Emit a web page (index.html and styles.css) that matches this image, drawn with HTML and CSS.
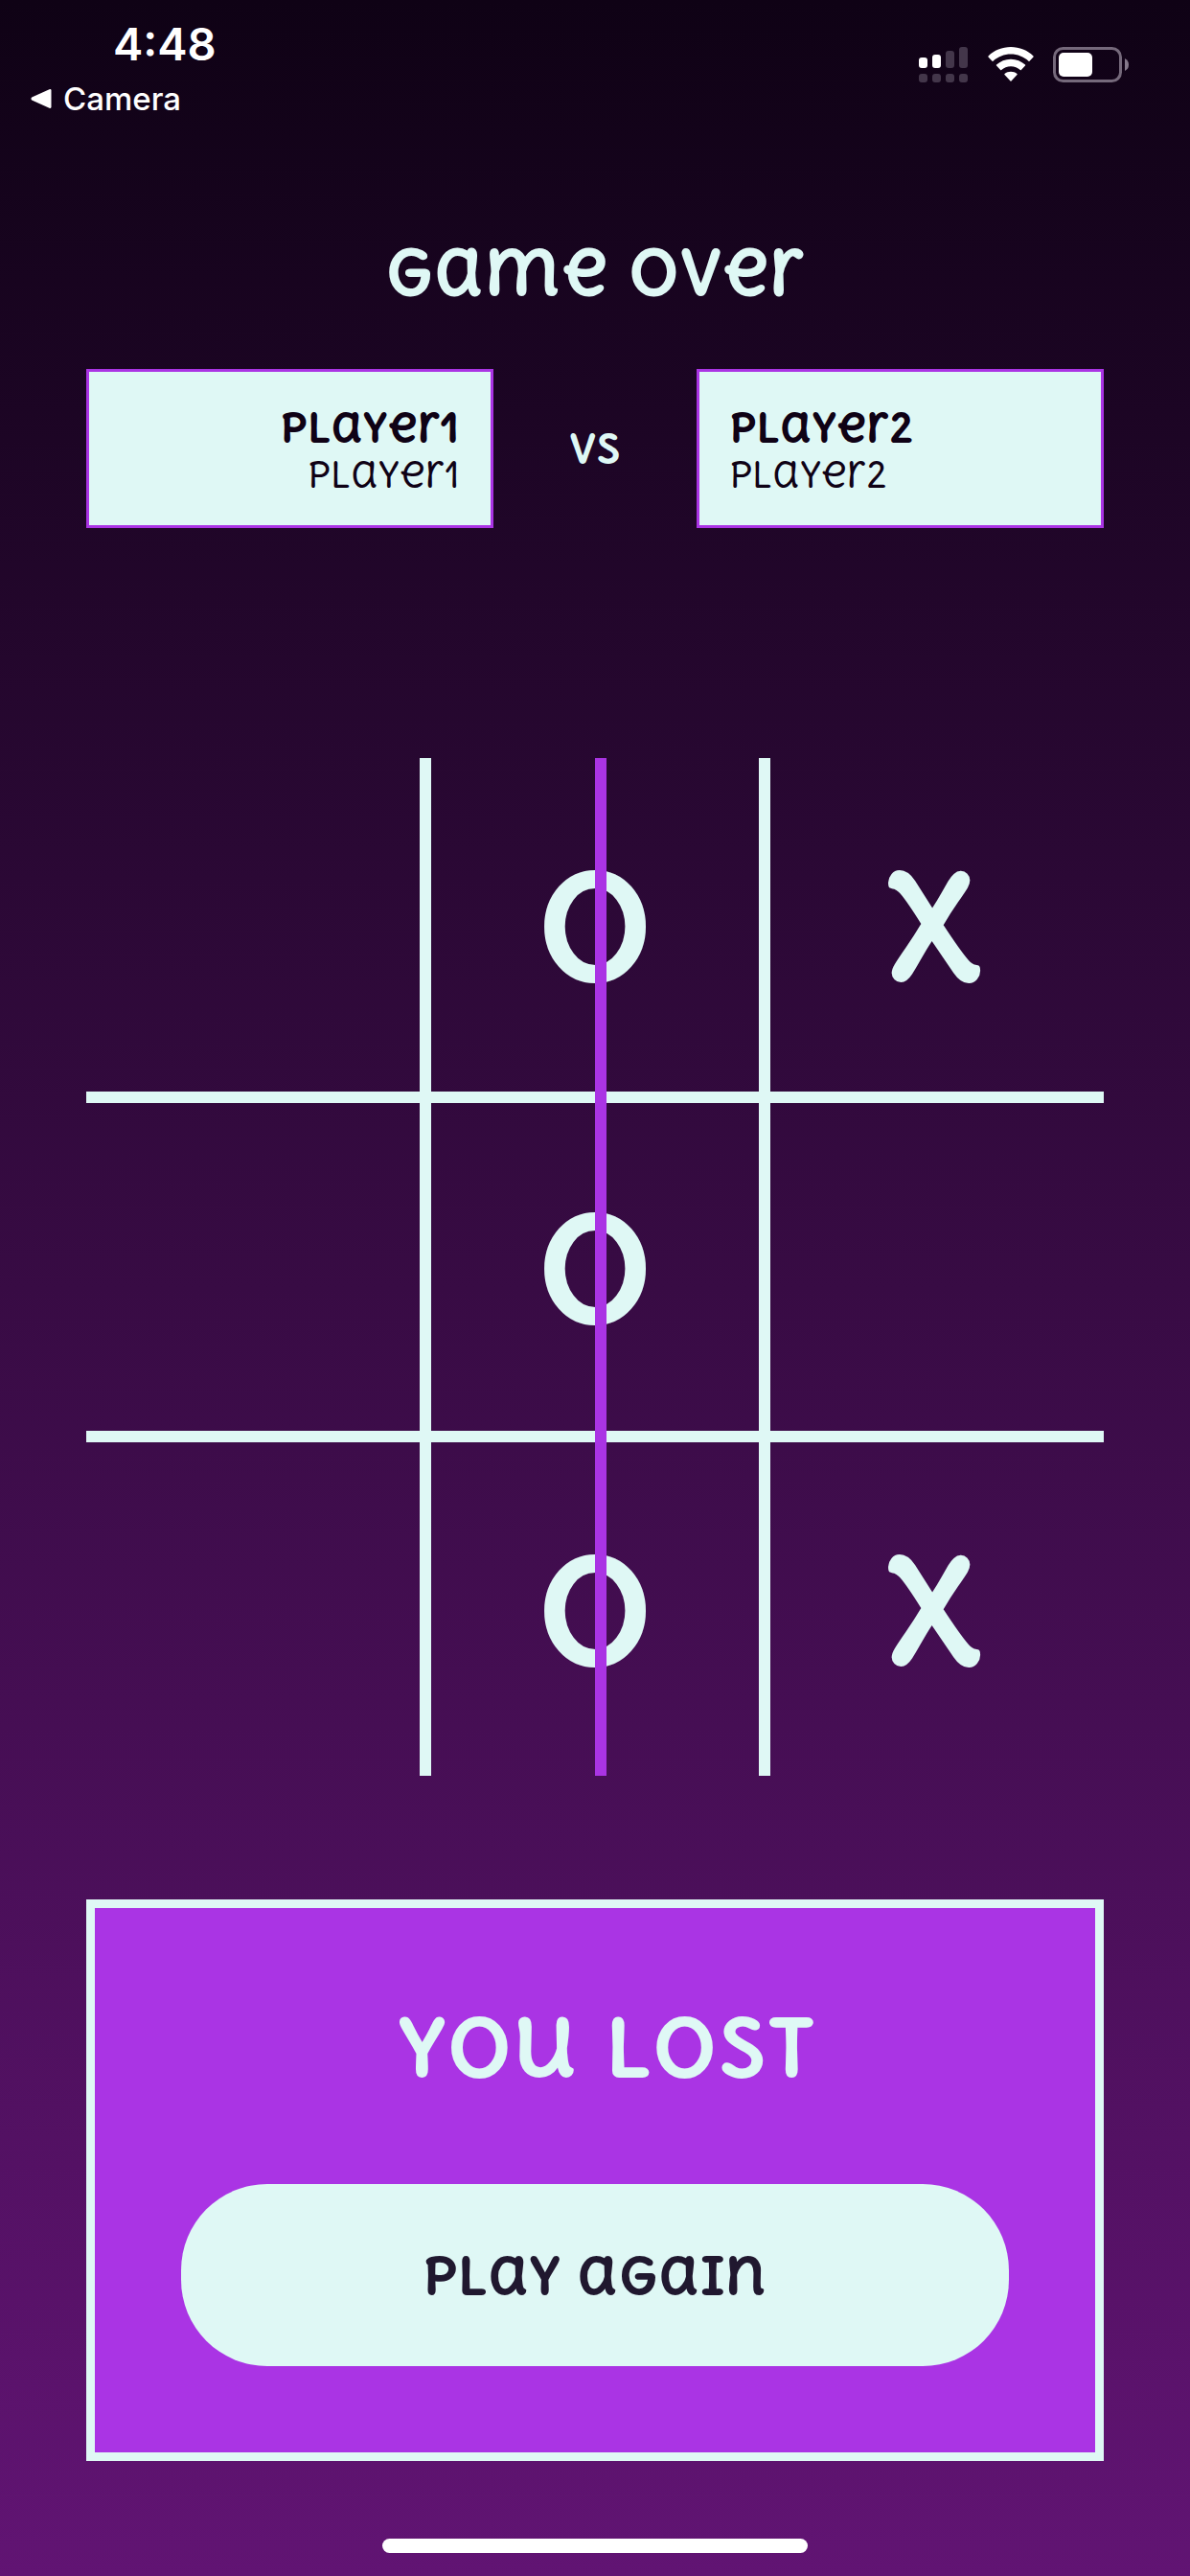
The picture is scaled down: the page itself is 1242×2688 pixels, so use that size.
FILE: index.html
```html
<!DOCTYPE html>
<html lang="en">
<head>
  <meta charset="utf-8">
  <meta name="viewport" content="width=device-width, initial-scale=1">
  <title>Game Over</title>
  <link rel="stylesheet" href="styles.css">
</head>
<body>
  <header class="status">
    <div class="status-left">
      <time class="clock">4:48</time>
      <a class="back" href="#">
        <svg width="22" height="22" viewBox="0 0 22 22" aria-hidden="true"><path d="M1.200 9.500 19.500 1.200Q21.500 .5 21.500 2.500V19.500Q21.500 21.500 19.500 20.800L1.200 12.500Q-.3 11 1.200 9.500Z" fill="#fff"/></svg>
        <span>Camera</span>
      </a>
    </div>
    <div class="status-icons">
      <svg width="52" height="38" viewBox="0 0 52 38" role="img" aria-label="Signal">
        <g fill="#fff"><rect x="0" y="11" width="9" height="11" rx="3"/><rect x="14" y="8" width="9" height="14" rx="3"/></g>
        <g fill="#43364a"><rect x="28" y="4" width="9" height="18" rx="3"/><rect x="42" y="0" width="9" height="22" rx="3"/><rect x="0" y="28" width="9" height="9" rx="3"/><rect x="14" y="28" width="9" height="9" rx="3"/><rect x="28" y="28" width="9" height="9" rx="3"/><rect x="42" y="28" width="9" height="9" rx="3"/></g>
      </svg>
      <svg width="48" height="38" viewBox="0 0 48 38" role="img" aria-label="Wi-Fi">
        <g fill="#fff"><path d="M24 0C33 0 41.500 3.500 47.500 9.500Q48 10 47.500 10.500L43.500 14.800Q43 15.200 42.500 14.800C37.500 10.200 31 7.600 24 7.600S10.500 10.200 5.500 14.800Q5 15.200 4.500 14.800L.5 10.500Q0 10 .5 9.500C6.500 3.500 15 0 24 0Z"/><path d="M24 12.800C29.800 12.800 35 15 39 18.600Q39.500 19.100 39 19.600L34.800 24Q34.300 24.400 33.800 24C31.200 21.700 27.800 20.300 24 20.300S16.800 21.700 14.200 24Q13.700 24.400 13.200 24L9 19.600Q8.500 19.100 9 18.600C13 15 18.200 12.800 24 12.800Z"/><path d="M24 25.800C26.500 25.800 28.700 26.600 30.500 28Q31 28.500 30.500 29L24.500 35.500Q24 36 23.500 35.500L17.500 29Q17 28.500 17.500 28C19.300 26.600 21.500 25.800 24 25.800Z"/></g>
      </svg>
      <svg width="80" height="38" viewBox="0 0 80 38" role="img" aria-label="Battery">
        <rect x="1.500" y="1.500" width="69" height="34" rx="9" fill="none" stroke="#75697b" stroke-width="3"/>
        <rect x="6" y="6" width="35" height="25" rx="5" fill="#fff"/>
        <path d="M75 12Q79 14 79 18.500T75 25Z" fill="#85798b"/>
      </svg>
    </div>
  </header>

  <main class="game">
    <h1 class="title">Game Over</h1>

    <section class="players" aria-label="Players">
      <div class="player player-first">
        <strong class="player-name">Player1</strong>
        <span class="player-user">Player1</span>
      </div>
      <span class="versus">vs</span>
      <div class="player">
        <strong class="player-name">Player2</strong>
        <span class="player-user">Player2</span>
      </div>
    </section>

    <section class="board" aria-label="Board">
      <div class="cell"></div><div class="cell">o</div><div class="cell">x</div>
      <div class="cell"></div><div class="cell">o</div><div class="cell"></div>
      <div class="cell"></div><div class="cell">o</div><div class="cell">x</div>
      <div class="win-line"></div>
    </section>

    <section class="result">
      <h2 class="result-title">&nbsp;You Lost</h2>
      <button class="play-again" type="button">Play again</button>
    </section>
  </main>

  <footer class="home"><div class="home-bar"></div></footer>
</body>
</html>
```
FILE: styles.css
```css
:root {
  --mint: #dff8f5;
  --purple: #aa34e4;
  --ink: #0f0215;
  --display: "Delius Unicase", "DejaVu Sans", sans-serif;
}

* {
  box-sizing: border-box;
}

body {
  margin: 0;
  min-height: 100vh;
  display: flex;
  flex-direction: column;
  background: linear-gradient(#0f0215, #611473);
  color: var(--mint);
  font-family: var(--display);
}

.status {
  display: flex;
  justify-content: space-between;
  align-items: flex-start;
  height: 128px;
  padding: 16px 63px 0 32px;
  color: #fff;
  font-family: Inter, sans-serif;
}

.status-left {
  display: flex;
  flex-direction: column;
}

.clock {
  padding-left: 86px;
  font-size: 47px;
  font-weight: 600;
  line-height: 60px;
}

.back {
  display: flex;
  align-items: center;
  gap: 12px;
  color: #fff;
  font-size: 33px;
  font-weight: 500;
  line-height: 54px;
  text-decoration: none;
}

.status-icons {
  display: flex;
  gap: 20px;
  padding-top: 33px;
}

.game {
  display: flex;
  flex-direction: column;
  padding: 0 90px;
}

.title {
  margin: 107px 0 52px;
  font-size: 66px;
  font-weight: 700;
  line-height: 98px;
  text-align: center;
}

.players {
  display: grid;
  grid-template-columns: 2fr 1fr 2fr;
  align-items: center;
}

.player {
  display: flex;
  flex-direction: column;
  padding: 32px 31px 30px;
  border: 3px solid var(--purple);
  background: var(--mint);
  color: var(--ink);
}

.player-first {
  text-align: right;
}

.player-name {
  font-size: 42px;
  line-height: 52px;
}

.player-user {
  font-size: 36px;
  line-height: 46px;
}

.versus {
  font-size: 42px;
  font-weight: 700;
  text-align: center;
}

.board {
  position: relative;
  display: grid;
  grid-template-columns: repeat(3, 1fr);
  grid-template-rows: repeat(3, calc(100% / 3));
  row-gap: 3px;
  aspect-ratio: 1;
  margin-top: 240px;
  background:
    linear-gradient(var(--mint), var(--mint)) calc(100% / 3 - 2px) 0 / 12px 100%,
    linear-gradient(var(--mint), var(--mint)) calc(200% / 3 + 2px) 0 / 12px 100%,
    linear-gradient(var(--mint), var(--mint)) 0 calc(100% / 3 - 2px) / 100% 12px,
    linear-gradient(var(--mint), var(--mint)) 0 calc(200% / 3 + 2px) / 100% 12px;
  background-repeat: no-repeat;
}

.cell {
  display: flex;
  align-items: center;
  justify-content: center;
  padding-bottom: 6px;
  font-size: 152px;
  font-weight: 700;
  line-height: 1;
}

.win-line {
  position: absolute;
  top: 0;
  bottom: 0;
  left: 50%;
  width: 12px;
  background: var(--purple);
}

.result {
  display: flex;
  flex-direction: column;
  gap: 90px;
  margin-top: 129px;
  padding: 90px;
  border: 9px solid var(--mint);
  background: var(--purple);
}

.result-title {
  margin: 0;
  font-size: 84px;
  font-weight: 700;
  line-height: 108px;
  text-align: center;
}

.play-again {
  height: 190px;
  border: 0;
  border-radius: 90px;
  background: var(--mint);
  color: #20182f;
  font-family: var(--display);
  font-size: 54px;
  font-weight: 700;
}

.home {
  display: flex;
  justify-content: center;
  margin-top: auto;
  padding: 24px 0;
}

.home-bar {
  width: 444px;
  height: 15px;
  border-radius: 8px;
  background: #fff;
}
```
